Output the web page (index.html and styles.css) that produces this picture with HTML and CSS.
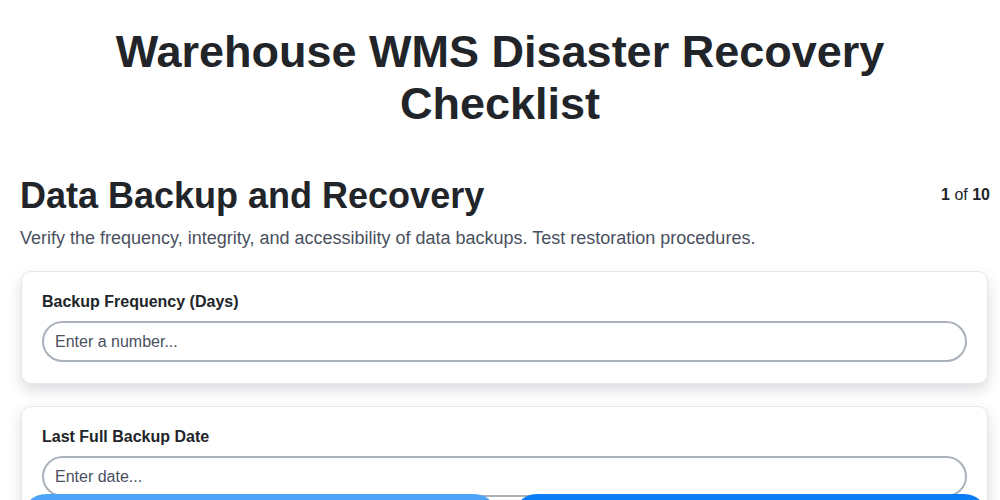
FILE: index.html
```html
<!DOCTYPE html>
<html lang="en">
<head>
<meta charset="utf-8">
<title>Warehouse WMS Disaster Recovery Checklist</title>
<link rel="stylesheet" href="styles.css">
</head>
<body>
<div class="page">
  <h1 class="title">Warehouse WMS Disaster Recovery Checklist</h1>
  <section class="step">
    <div class="step-head">
      <h2 class="step-title">Data Backup and Recovery</h2>
      <div class="step-count"><b>1</b> of <b>10</b></div>
    </div>
    <p class="step-desc">Verify the frequency, integrity, and accessibility of data backups. Test restoration procedures.</p>
    <div class="card">
      <label class="field-label" for="freq">Backup Frequency (Days)</label>
      <input class="field-input" id="freq" type="text" placeholder="Enter a number...">
    </div>
    <div class="card">
      <label class="field-label" for="last">Last Full Backup Date</label>
      <input class="field-input" id="last" type="text" placeholder="Enter date...">
    </div>
  </section>
</div>
<nav class="nav">
  <button class="btn btn-prev" type="button" disabled>Previous</button>
  <button class="btn btn-next" type="button">Next</button>
</nav>
</body>
</html>
```

FILE: styles.css
```css
* { box-sizing: border-box; }
html, body { margin: 0; padding: 0; background: #ffffff; }
body {
  font-family: "Liberation Sans", Arial, sans-serif;
  color: #1f2328;
}
.page {
  padding: 26px 10px 40px 20px;
}
.title {
  margin: 0 auto;
  max-width: 820px;
  padding-right: 10px;
  text-align: center;
  font-size: 45px;
  line-height: 52px;
  font-weight: 700;
  color: #212529;
}
.step { margin-top: 44px; }
.step-head {
  display: flex;
  justify-content: space-between;
  align-items: flex-start;
}
.step-title {
  margin: 0;
  font-size: 36px;
  line-height: 44px;
  font-weight: 700;
  color: #212529;
}
.step-count {
  font-size: 16px;
  line-height: 20px;
  padding-top: 11px;
  color: #212529;
}
.step-desc {
  margin: 8px 0 21px;
  font-size: 18px;
  line-height: 24px;
  color: #4a5060;
}
.card {
  margin: 0 2px 22px 1px;
  padding: 20px 20px 21px 20px;
  background: #fff;
  border: 1px solid #e6e7ec;
  border-radius: 10px;
  box-shadow: 0 6px 14px rgba(40, 40, 60, 0.16);
}
.field-label {
  display: block;
  font-size: 16px;
  line-height: 20px;
  font-weight: 700;
  color: #212529;
  margin-bottom: 9px;
}
.field-input {
  display: block;
  width: 100%;
  height: 41px;
  padding: 0 11px;
  font-family: "Liberation Sans", Arial, sans-serif;
  font-size: 16px;
  border: 2px solid #aab1bb;
  border-radius: 21px;
  background: #fff;
  color: #212529;
  outline: none;
}
.field-input::placeholder { color: #4a5060; opacity: 1; }
.nav {
  position: fixed;
  left: 22px;
  right: 12px;
  top: 494px;
  display: flex;
  gap: 15px;
}
.btn {
  flex: 1;
  height: 48px;
  border: none;
  border-radius: 24px;
  font-family: "Liberation Sans", Arial, sans-serif;
  font-size: 16px;
  font-weight: 700;
  color: #fff;
}
.btn-prev { background: #4da3f7; }
.btn-next { background: #0a7cf5; }
```
